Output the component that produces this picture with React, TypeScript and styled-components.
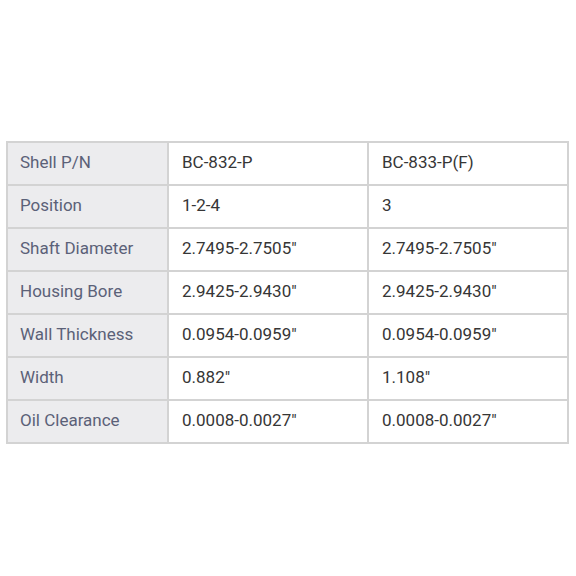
import React from "react";
import styled, { createGlobalStyle } from "styled-components";

const Global = createGlobalStyle`
  html, body { margin: 0; padding: 0; background: #ffffff; }
  body { width: 576px; height: 576px; overflow: hidden; font-family: Roboto, "Liberation Sans", Arial, sans-serif; }
`;

const Page = styled.div`
  width: 576px;
  height: 576px;
  padding: 141px 7px 0 6px;
  box-sizing: border-box;
`;

const Table = styled.table`
  width: 563px;
  border-collapse: collapse;
  table-layout: fixed;
  border: 2px solid #d3d3d3;
`;

const Label = styled.th`
  width: 161px;
  height: 43px;
  box-sizing: border-box;
  padding: 0 12px 4px 12px;
  background: #ececee;
  border: 2px solid #d3d3d3;
  color: #5b6178;
  font-weight: 400;
  font-size: 17px;
  text-align: left;
  vertical-align: middle;
`;

const Cell = styled.td`
  height: 43px;
  box-sizing: border-box;
  padding: 0 13px 4px 13px;
  background: #ffffff;
  border: 2px solid #d3d3d3;
  color: #363636;
  font-size: 17px;
  text-align: left;
  vertical-align: middle;
`;

const rows: [string, string, string][] = [
  ["Shell P/N", "BC-832-P", "BC-833-P(F)"],
  ["Position", "1-2-4", "3"],
  ["Shaft Diameter", "2.7495-2.7505\"", "2.7495-2.7505\""],
  ["Housing Bore", "2.9425-2.9430\"", "2.9425-2.9430\""],
  ["Wall Thickness", "0.0954-0.0959\"", "0.0954-0.0959\""],
  ["Width", "0.882\"", "1.108\""],
  ["Oil Clearance", "0.0008-0.0027\"", "0.0008-0.0027\""],
];

export default function App() {
  return (
    <>
      <Global />
      <Page>
        <Table>
          <tbody>
            {rows.map((r) => (
              <tr key={r[0]}>
                <Label>{r[0]}</Label>
                <Cell>{r[1]}</Cell>
                <Cell>{r[2]}</Cell>
              </tr>
            ))}
          </tbody>
        </Table>
      </Page>
    </>
  );
}
